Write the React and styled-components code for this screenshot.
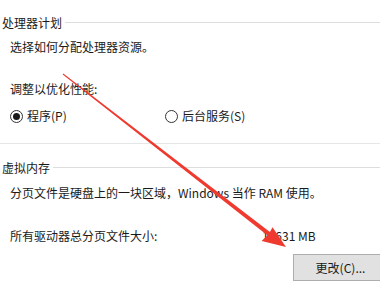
import React from "react";
import styled, { createGlobalStyle } from "styled-components";

const GlobalStyle = createGlobalStyle`
  html, body {
    margin: 0;
    padding: 0;
    background: #ffffff;
    overflow: hidden;
  }
  body {
    font-family: "Microsoft YaHei", "Noto Sans CJK SC", "Noto Sans", sans-serif;
    font-size: 12px;
    color: #1a1a1a;
  }
`;

const Page = styled.div`
  position: relative;
  width: 380px;
  height: 285px;
  overflow: hidden;
  padding-top: 15px;
  box-sizing: border-box;
`;

const Legend = styled.div`
  display: flex;
  align-items: center;
  height: 16px;
  line-height: 16px;
  padding-left: 2px;
  margin-top: ${({ $top }) => $top || 0}px;

  &::after {
    content: "";
    flex: 1;
    height: 1px;
    margin-left: 3px;
    margin-top: -1px;
    background: #dddddd;
  }
`;

const Text = styled.div`
  height: 16px;
  line-height: 16px;
  padding-left: 10px;
  margin-top: ${({ $top }) => $top || 0}px;
  white-space: nowrap;
`;

const RadioRow = styled.div`
  display: flex;
  align-items: center;
  height: 16px;
  margin-top: 11px;
  padding-left: 10px;
`;

const RadioItem = styled.label`
  display: flex;
  align-items: center;
  gap: 4px;
  width: ${({ $width }) => $width || "auto"};
  line-height: 16px;
`;

const RadioCircle = styled.span`
  box-sizing: border-box;
  width: 13px;
  height: 13px;
  border-radius: 50%;
  border: 1px solid #333333;
  display: flex;
  align-items: center;
  justify-content: center;

  &::after {
    content: "";
    width: 7px;
    height: 7px;
    border-radius: 50%;
    background: ${({ $checked }) => ($checked ? "#1a1a1a" : "transparent")};
  }
`;

const Separator = styled.div`
  height: 1px;
  background: #e6e6e6;
  margin-top: 19px;
`;

const SizeRow = styled.div`
  display: flex;
  height: 16px;
  line-height: 16px;
  padding-left: 10px;
  margin-top: 27px;
`;

const SizeLabel = styled.span`
  width: 252px;
`;

const ButtonRow = styled.div`
  display: flex;
  margin-top: 10px;
  padding-left: 293px;
`;

const Button = styled.button`
  flex: none;
  width: 95px;
  height: 27px;
  border: 1px solid #adadad;
  background: #e1e1e1;
  font-family: inherit;
  font-size: 12px;
  color: #1a1a1a;
  padding: 0;
`;

const Arrow = styled.svg`
  position: absolute;
  left: 0;
  top: 0;
  pointer-events: none;
`;

const Radio = ({ checked, label, width }) => (
  <RadioItem $width={width}>
    <RadioCircle $checked={checked} />
    {label}
  </RadioItem>
);

export default function App() {
  return (
    <>
      <GlobalStyle />
      <Page>
        <Legend>处理器计划</Legend>
        <Text $top={8}>选择如何分配处理器资源。</Text>
        <Text $top={26}>调整以优化性能:</Text>
        <RadioRow>
          <Radio checked label="程序(P)" width="155px" />
          <Radio label="后台服务(S)" />
        </RadioRow>
        <Separator />

        <Legend $top={16}>虚拟内存</Legend>
        <Text $top={9}>分页文件是硬盘上的一块区域，Windows 当作 RAM 使用。</Text>
        <SizeRow>
          <SizeLabel>所有驱动器总分页文件大小:</SizeLabel>
          <span>14631 MB</span>
        </SizeRow>
        <ButtonRow>
          <Button>更改(C)...</Button>
        </ButtonRow>

        <Arrow width="380" height="285" viewBox="0 0 380 285">
          <polygon
            fill="#ee3a2f"
            points="62.7,74.4 63.3,73.6 269.9,231.9 272.5,227.3 286,247 261.7,240.9 267.3,235.3"
          />
        </Arrow>
      </Page>
    </>
  );
}
